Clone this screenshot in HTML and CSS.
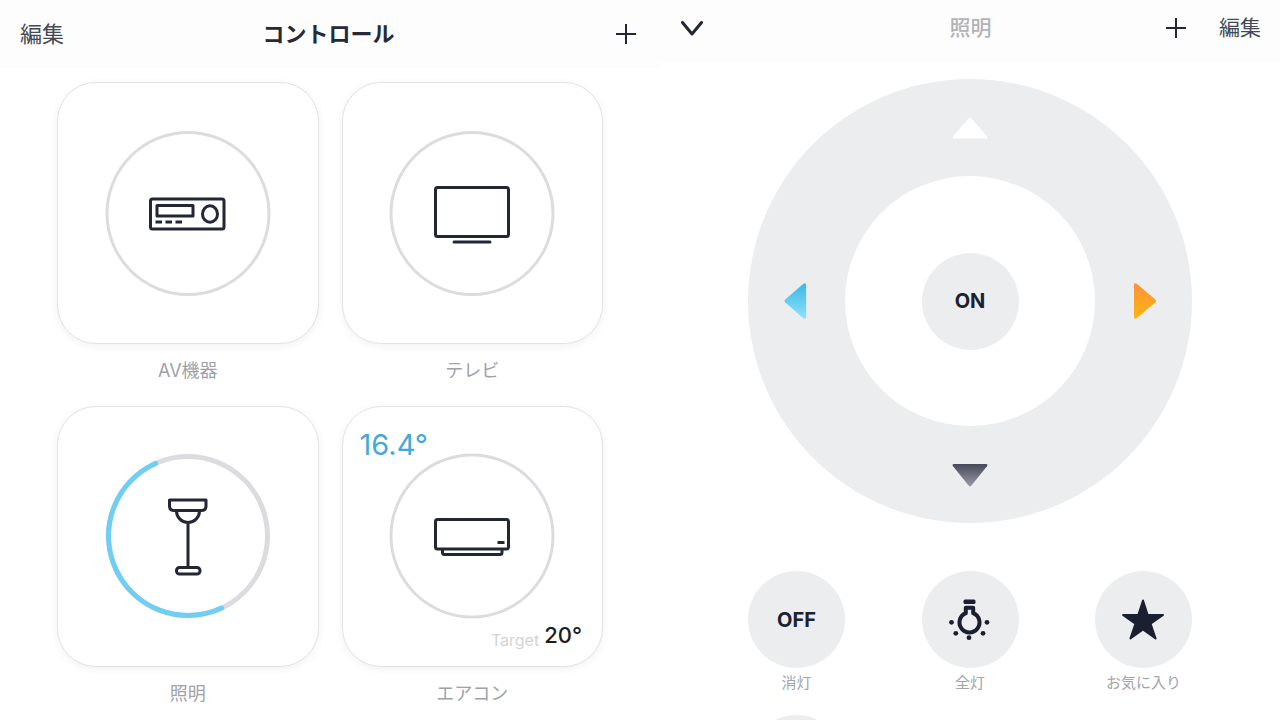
FILE: index.html
```html
<!DOCTYPE html>
<html lang="ja">
<head>
  <meta charset="UTF-8">
  <meta name="viewport" content="width=device-width, initial-scale=1">
  <title>コントロール</title>
  <link rel="stylesheet" href="styles.css">
</head>
<body>

  <!-- 機器一覧 -->
  <section class="panel">
    <header class="header">
      <div class="header-side">
        <button class="text-button">編集</button>
      </div>
      <h1 class="title">コントロール</h1>
      <div class="header-side right">
        <button class="icon-button" aria-label="追加">
          <svg width="22" height="22" viewBox="0 0 22 22"><path class="thin" d="M11 1V21M1 11H21"/></svg>
        </button>
      </div>
    </header>

    <main class="devices">
      <div class="device">
        <button class="card" aria-labelledby="av">
          <svg class="device-icon" width="166" height="166" viewBox="0 0 166 166">
            <circle class="ring" cx="83" cy="83.5" r="81"/>
            <rect x="45.5" y="69" width="73.5" height="30" rx="2"/>
            <rect x="52" y="75.5" width="36" height="10.5"/>
            <ellipse cx="105" cy="84" rx="7.5" ry="8.2"/>
            <path d="M50.5 92H57M60.5 92H67M70.5 92H77"/>
          </svg>
        </button>
        <span class="device-name" id="av">AV機器</span>
      </div>

      <div class="device">
        <button class="card" aria-labelledby="tv">
          <svg class="device-icon" width="166" height="166" viewBox="0 0 166 166">
            <circle class="ring" cx="83" cy="83.5" r="81"/>
            <rect x="46.5" y="57.5" width="73" height="49" rx="2"/>
            <path d="M65 112H101" stroke-linecap="round"/>
          </svg>
        </button>
        <span class="device-name" id="tv">テレビ</span>
      </div>

      <div class="device">
        <button class="card" aria-labelledby="light">
          <svg class="device-icon" width="166" height="166" viewBox="0 0 166 166">
            <circle class="ring thick" cx="83" cy="83" r="79.5"/>
            <circle class="progress" cx="83" cy="83" r="79.5" pathLength="360" stroke-dasharray="181 179" transform="rotate(65 83 83)"/>
            <path d="M64.5 47H101V53Q101 57.5 96.5 57.5H69Q64.5 57.5 64.5 53Z"/>
            <path d="M71.5 58A11.5 11.5 0 0 0 94.5 58M83 70V114"/>
            <rect x="71.5" y="114.5" width="23.5" height="6.5" rx="3"/>
          </svg>
        </button>
        <span class="device-name" id="light">照明</span>
      </div>

      <div class="device">
        <button class="card" aria-labelledby="aircon">
          <svg class="device-icon" width="166" height="166" viewBox="0 0 166 166">
            <circle class="ring" cx="83" cy="83" r="81"/>
            <rect x="46.5" y="66.5" width="73" height="29.5" rx="2"/>
            <path d="M108.5 89.5H115.5"/>
            <path d="M53.5 97V99.5Q53.5 101.5 55.5 101.5H111Q113 101.5 113 99.5V97"/>
          </svg>
          <span class="room-temp">16.4°</span>
          <span class="target">Target <b class="target-temp">20°</b></span>
        </button>
        <span class="device-name" id="aircon">エアコン</span>
      </div>
    </main>
  </section>

  <!-- 照明リモコン -->
  <section class="panel">
    <header class="header remote-header">
      <div class="header-side">
        <button class="icon-button" aria-label="閉じる">
          <svg width="24" height="16" viewBox="0 0 24 16"><path d="M2.5 2.5L12 14L21.5 2.5" stroke-linecap="round"/></svg>
        </button>
      </div>
      <h2 class="title muted">照明</h2>
      <div class="header-side right">
        <button class="icon-button" aria-label="追加">
          <svg width="22" height="22" viewBox="0 0 22 22"><path class="thin" d="M11 1V21M1 11H21"/></svg>
        </button>
        <button class="text-button">編集</button>
      </div>
    </header>

    <main class="remote">
      <div class="dial">
        <button class="arrow up" aria-label="明るく">
          <svg width="36" height="36" viewBox="0 0 36 36"><path fill="#ffffff" d="M16.8 8.2Q18 7 19.2 8.2L35 26.2Q36.4 28.5 34 28.5H2Q-.4 28.5 1 26.2Z"/></svg>
        </button>
        <button class="arrow left" aria-label="色温度を冷たく">
          <svg width="36" height="36" viewBox="0 0 36 36">
            <linearGradient id="cool" x1="0" y1="0" x2="0" y2="1"><stop offset="0" stop-color="#3db7e4"/><stop offset="1" stop-color="#8be2fd"/></linearGradient>
            <path fill="url(#cool)" d="M6 19.2Q5 18 6 16.8L24.1 1Q27.1-.8 27.1 2V34Q27.1 36.8 24.1 35Z"/>
          </svg>
        </button>
        <div class="hole">
          <button class="round">ON</button>
        </div>
        <button class="arrow right" aria-label="色温度を暖かく">
          <svg width="36" height="36" viewBox="0 0 36 36">
            <linearGradient id="warm" x1="0" y1="0" x2="0" y2="1"><stop offset="0" stop-color="#fb923a"/><stop offset="1" stop-color="#ffb412"/></linearGradient>
            <path fill="url(#warm)" d="M29.6 19.2Q30.6 18 29.6 16.8L11 1Q8-.8 8 2V34Q8 36.8 11 35Z"/>
          </svg>
        </button>
        <button class="arrow down" aria-label="暗く">
          <svg width="36" height="36" viewBox="0 0 36 36">
            <linearGradient id="dim" x1="0" y1="0" x2="0" y2="1"><stop offset="0" stop-color="#46495c"/><stop offset="1" stop-color="#9a98a6"/></linearGradient>
            <path fill="url(#dim)" d="M16.8 28.8Q18 30 19.2 28.8L35 9.3Q36.4 7 34 7H2Q-.4 7 1 9.3Z"/>
          </svg>
        </button>
      </div>

      <div class="actions">
        <div class="action">
          <button class="round" aria-describedby="off">OFF</button>
          <span class="action-name" id="off">消灯</span>
        </div>
        <div class="action">
          <button class="round" aria-labelledby="full">
            <svg width="48" height="48" viewBox="0 0 48 48">
              <rect class="solid" x="17.5" y="3.5" width="12" height="4.5" rx="1.5"/>
              <path class="bulb" d="M19.8 11.7H27.2V17.2A10 10 0 1 1 19.8 17.2Z"/>
              <g class="solid">
                <circle cx="5.5" cy="26.3" r="2.4"/>
                <circle cx="9.8" cy="37.3" r="2.4"/>
                <circle cx="23" cy="41.7" r="2.4"/>
                <circle cx="37" cy="37.3" r="2.4"/>
                <circle cx="41" cy="26.3" r="2.4"/>
              </g>
            </svg>
          </button>
          <span class="action-name" id="full">全灯</span>
        </div>
        <div class="action">
          <button class="round" aria-labelledby="favorite">
            <svg width="48" height="48" viewBox="0 0 48 48">
              <path class="star" d="M23 4.5L27.7 19H43L30.6 27.8L35.6 42.5L23 33.5L10.4 42.5L15.4 27.8L3 19H18.3Z"/>
            </svg>
          </button>
          <span class="action-name" id="favorite">お気に入り</span>
        </div>
        <div class="action">
          <button class="round" aria-label="その他"></button>
        </div>
      </div>
    </main>
  </section>

</body>
</html>
```
FILE: styles.css
```css
* {
  box-sizing: border-box;
}

body {
  margin: 0;
  display: grid;
  grid-template-columns: 33fr 31fr;
  height: 100vh;
  overflow: hidden;
  background-color: #fff;
  color: #1c2130;
  font-family: Inter, "Noto Sans CJK JP", sans-serif;
}

button {
  padding: 0;
  border: none;
  background: none;
  color: inherit;
  font-family: inherit;
  cursor: pointer;
}

svg {
  display: block;
  fill: none;
  stroke: #232635;
  stroke-width: 3;
  stroke-linejoin: round;
}

.thin {
  stroke-width: 2;
}

/* ヘッダー */
.header {
  display: grid;
  grid-template-columns: 1fr auto 1fr;
  align-items: center;
  height: 68px;
  padding: 0 23px 0 20px;
  background-color: #fdfdfd;
}

.header-side {
  display: flex;
  align-items: center;
  gap: 32px;
}

.header-side.right {
  justify-content: flex-end;
}

.title {
  margin: 0;
  color: #262a38;
  font-size: 22px;
  line-height: 32px;
  font-weight: 700;
}

.title.muted {
  color: #b2b3b8;
  font-size: 21px;
  font-weight: 500;
}

.text-button {
  color: #444957;
  font-size: 22px;
  line-height: 32px;
}

.remote-header {
  height: 62px;
  padding: 0 19px 6px 20px;
}

.remote-header .text-button {
  font-size: 21px;
}

/* 機器カード */
.devices {
  display: grid;
  grid-template-columns: 1fr 1fr;
  gap: 22px 23px;
  padding: 14px 57px 0;
}

.device {
  display: flex;
  flex-direction: column;
  gap: 14px;
}

.card {
  position: relative;
  display: flex;
  align-items: center;
  justify-content: center;
  aspect-ratio: 1;
  border: 1px solid #e3e3e5;
  border-radius: 39px;
  background-color: #fff;
  box-shadow: 0 2px 8px rgba(0, 0, 0, 0.06);
}

.device-name {
  color: #a0a1a8;
  font-size: 18px;
  line-height: 26px;
  text-align: center;
}

.ring {
  stroke: #dcdce0;
}

.ring.thick {
  stroke-width: 5;
}

.progress {
  stroke: #6fcef2;
  stroke-width: 5;
  stroke-linecap: round;
}

.room-temp {
  position: absolute;
  top: 19px;
  left: 17px;
  color: #45a9d8;
  font-size: 29px;
  line-height: 38px;
}

.target {
  position: absolute;
  right: 20px;
  bottom: 16px;
  display: flex;
  align-items: flex-end;
  gap: 5px;
  color: #d3d4d9;
  font-size: 16px;
  line-height: 20px;
}

.target-temp {
  color: #1c1d24;
  font-size: 22px;
  line-height: 30px;
  font-weight: 500;
}

/* リモコン */
.remote {
  display: flex;
  flex-direction: column;
  gap: 48px;
  padding: 17px 88px 0;
}

.dial {
  display: grid;
  grid-template-columns: 97px 1fr 97px;
  grid-template-rows: 97px 1fr 97px;
  grid-template-areas:
    ". up ."
    "left hole right"
    ". down .";
  aspect-ratio: 1;
  border-radius: 50%;
  background-color: #ecedef;
}

.arrow {
  display: flex;
  align-items: center;
  justify-content: center;
}

.arrow svg {
  stroke: none;
}

.arrow.up {
  grid-area: up;
}

.arrow.left {
  grid-area: left;
}

.arrow.right {
  grid-area: right;
}

.arrow.down {
  grid-area: down;
}

.hole {
  grid-area: hole;
  display: flex;
  align-items: center;
  justify-content: center;
  border-radius: 50%;
  background-color: #fff;
}

.round {
  display: flex;
  align-items: center;
  justify-content: center;
  width: 97px;
  height: 97px;
  border-radius: 50%;
  background-color: #ecedef;
  font-size: 20px;
  font-weight: 700;
}

.round svg {
  stroke: #1a2032;
}

.round .solid,
.round .star {
  fill: #1a2032;
}

.round .solid {
  stroke: none;
}

.round .bulb {
  stroke-width: 4;
}

.round .star {
  stroke-width: 2;
}

.actions {
  display: grid;
  grid-template-columns: repeat(3, 97px);
  justify-content: space-between;
  row-gap: 21px;
}

.action {
  display: flex;
  flex-direction: column;
  align-items: center;
  gap: 4px;
}

.action-name {
  color: #a3a4aa;
  font-size: 15px;
  line-height: 22px;
  white-space: nowrap;
}
```
